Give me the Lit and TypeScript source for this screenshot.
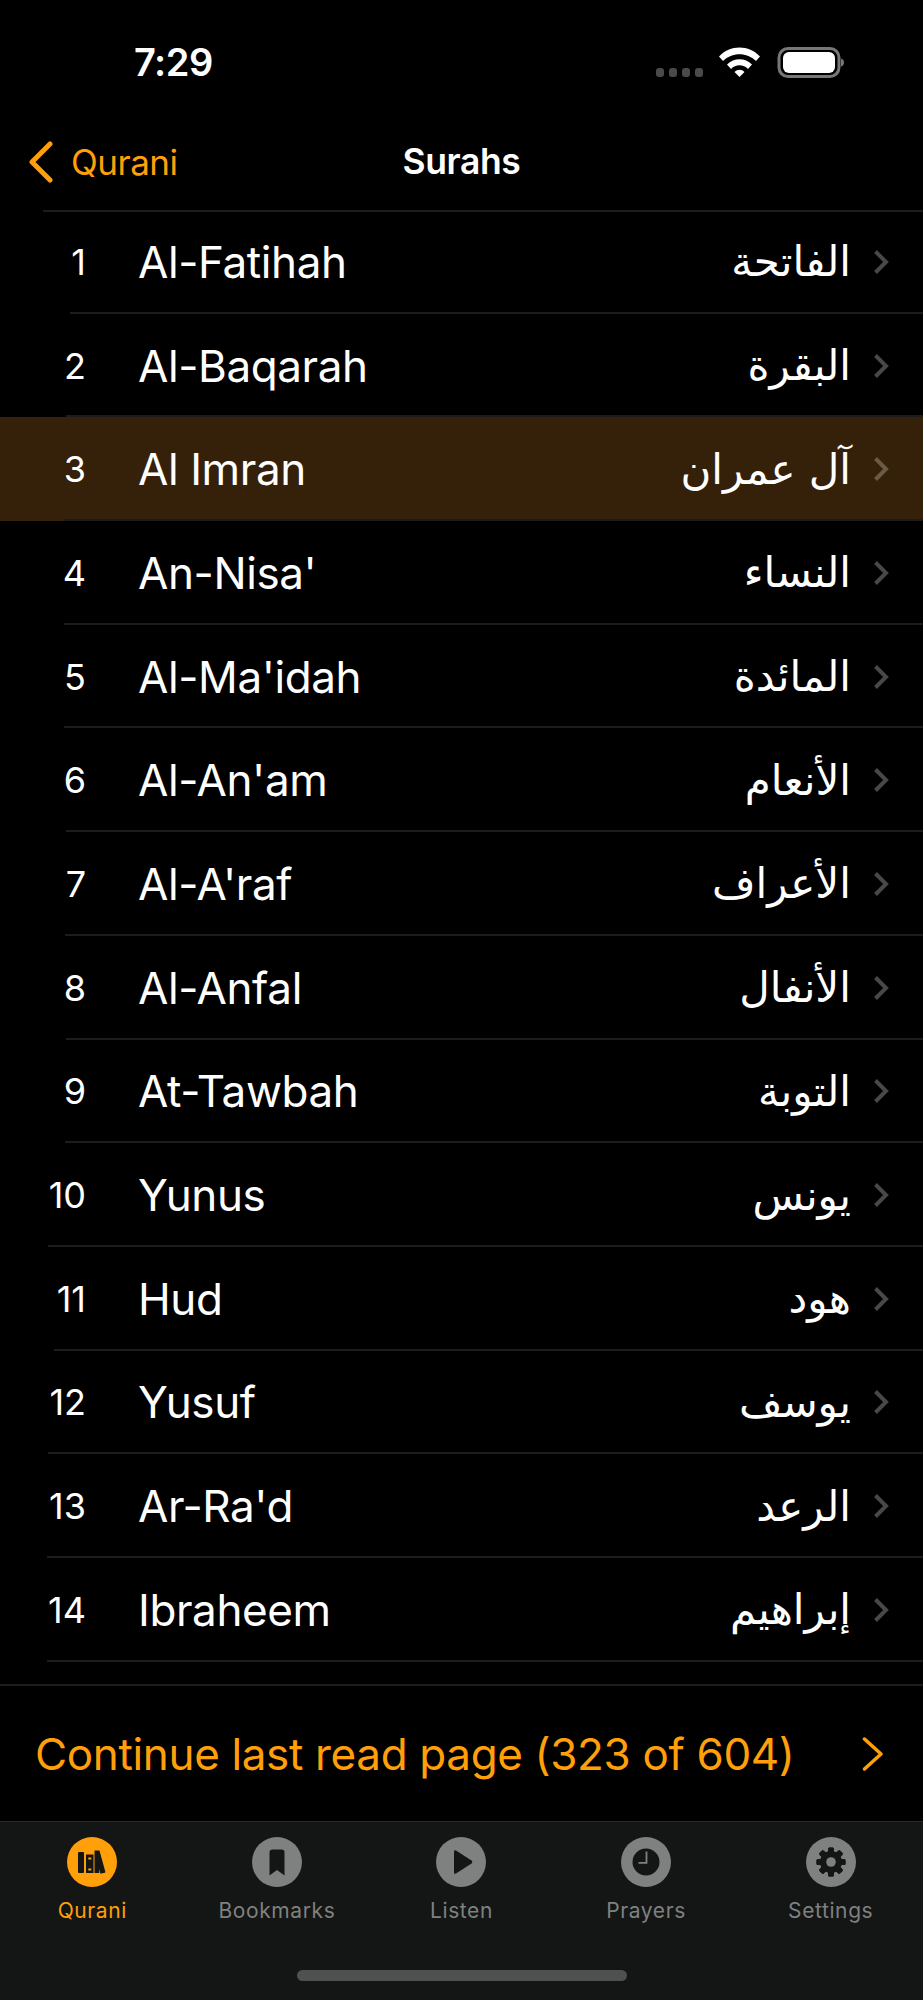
import { LitElement, html, css, svg } from 'lit';
import { customElement } from 'lit/decorators.js';

const surahs = [
  { n: 1, name: 'Al-Fatihah', ar: 'الفاتحة', sep: 70 },
  { n: 2, name: 'Al-Baqarah', ar: 'البقرة', sep: 66 },
  { n: 3, name: 'Al Imran', ar: 'آل عمران', sep: 64, active: true },
  { n: 4, name: "An-Nisa'", ar: 'النساء', sep: 64 },
  { n: 5, name: "Al-Ma'idah", ar: 'المائدة', sep: 64 },
  { n: 6, name: "Al-An'am", ar: 'الأنعام', sep: 66 },
  { n: 7, name: "Al-A'raf", ar: 'الأعراف', sep: 65 },
  { n: 8, name: 'Al-Anfal', ar: 'الأنفال', sep: 66 },
  { n: 9, name: 'At-Tawbah', ar: 'التوبة', sep: 65 },
  { n: 10, name: 'Yunus', ar: 'يونس', sep: 48 },
  { n: 11, name: 'Hud', ar: 'هود', sep: 54 },
  { n: 12, name: 'Yusuf', ar: 'يوسف', sep: 48 },
  { n: 13, name: "Ar-Ra'd", ar: 'الرعد', sep: 47 },
  { n: 14, name: 'Ibraheem', ar: 'إبراهيم', sep: 47 },
];

const gearTeeth = [0, 45, 90, 135, 180, 225, 270, 315];

const tabs = [
  {
    label: 'Qurani',
    active: true,
    icon: svg`
      <rect x="11" y="15" width="6" height="21" rx="1"/>
      <path d="M19 17.5h7.5V36H19z M21.3 20.5v2h3v-2z M21.3 31.5v2h3v-2z" fill-rule="evenodd"/>
      <path d="M27.5 13.5h5l6 22-5 1.3-1.2-4.8v4h-4.800z"/>`,
  },
  {
    label: 'Bookmarks',
    icon: svg`<path d="M17.500 15.500q0-3 3-3h9q3 0 3 3V38.500L25 33l-7.500 5.500z"/>`,
  },
  {
    label: 'Listen',
    icon: svg`<path d="M18 14.500q0-2 2-1l15.500 10q1.800 1.500 0 3L20 36.500q-2 1-2-1z"/>`,
  },
  {
    label: 'Prayers',
    icon: svg`
      <circle cx="25" cy="25" r="13.500"/>
      <path d="M25.500 14.500V25.800H17.500" fill="none" stroke="#7f8180" stroke-width="1.800"/>`,
  },
  {
    label: 'Settings',
    icon: svg`
      ${gearTeeth.map((a) => svg`<rect x="22" y="10.500" width="6" height="29" rx="1.500" transform="rotate(${a} 25 25)"/>`)}
      <circle cx="25" cy="25" r="11"/>
      <circle cx="25" cy="25" r="4.800" fill="#7f8180"/>`,
  },
];

@customElement('app-root')
export class AppRoot extends LitElement {
  static styles = css`
    :host {
      display: block;
      width: 923px;
      height: 2000px;
      background: #000;
      color: #fff;
      font-family: Inter, 'Noto Sans', sans-serif;
      overflow: hidden;
    }
    .status {
      height: 120px;
      box-sizing: border-box;
      padding: 42px 79px 0 134px;
      display: flex;
      justify-content: space-between;
      align-items: flex-start;
    }
    .time {
      font-size: 38px;
      font-weight: 600;
      line-height: 40px;
      letter-spacing: -0.5px;
    }
    .status-icons {
      display: flex;
      align-items: flex-start;
      padding-top: 5px;
    }
    .nav {
      height: 90px;
      display: grid;
      grid-template-columns: 1fr auto 1fr;
      align-items: center;
      padding-bottom: 7px;
      box-sizing: border-box;
    }
    .back {
      display: flex;
      align-items: center;
      gap: 16px;
      padding-left: 27px;
      color: #ff9f0a;
      font-size: 35px;
      letter-spacing: -0.5px;
    }
    .title {
      font-size: 35.500px;
      font-weight: 600;
      letter-spacing: -0.4px;
    }
    .list {
      height: 1452px;
    }
    .top-sep {
      height: 2px;
      background: #1c1c1e;
      margin-left: 43px;
      margin-bottom: -2px;
    }
    .row {
      height: 103.700px;
      box-sizing: border-box;
      display: flex;
      align-items: center;
      position: relative;
    }
    .row.active {
      background: #35210a;
    }
    .num {
      width: 86px;
      text-align: right;
      font-size: 36px;
      flex: none;
    }
    .name {
      margin-left: 52px;
      font-size: 44px;
      letter-spacing: -0.4px;
      flex: 1;
    }
    .ar {
      font-family: 'DejaVu Sans', sans-serif;
      font-size: 42px;
      direction: rtl;
    }
    .chev {
      margin: 0 34px 0 22px;
      flex: none;
      display: block;
    }
    .sep {
      position: absolute;
      right: 0;
      bottom: 0;
      height: 2px;
      background: #1c1c1e;
    }
    .continue {
      margin-top: 22px;
      border-top: 2px solid #1c1c1e;
      height: 137px;
      box-sizing: border-box;
      display: flex;
      align-items: center;
      justify-content: space-between;
      padding: 0 39px 0 35px;
      color: #ff9f0a;
      font-size: 44px;
      letter-spacing: -0.35px;
    }
    .tabbar {
      height: 179px;
      box-sizing: border-box;
      border-top: 1px solid #2a2a2a;
      background: #141515;
      padding-top: 15px;
      position: relative;
    }
    .tabs {
      display: grid;
      grid-template-columns: repeat(5, 1fr);
    }
    .tab {
      display: flex;
      flex-direction: column;
      align-items: center;
      color: #7f8180;
      font-size: 21px;
      letter-spacing: 0.6px;
    }
    .tab.active {
      color: #ff9f0a;
    }
    .tab-icon {
      width: 50px;
      height: 50px;
      border-radius: 50%;
      background: currentColor;
      margin-bottom: 11px;
    }
    .tab-icon svg {
      display: block;
      fill: #141515;
    }
    .home {
      width: 330px;
      height: 11px;
      border-radius: 6px;
      background: #4f5050;
      margin: 47px auto 0;
    }
  `;

  render() {
    return html`
      <div class="status">
        <div class="time">7:29</div>
        <div class="status-icons">
          <svg width="188" height="32" viewBox="0 0 188 32">
            <g fill="#4a4a4a">
              <rect x="0" y="21" width="8" height="9" rx="3"/>
              <rect x="13" y="21" width="8" height="9" rx="3"/>
              <rect x="26" y="21" width="8" height="9" rx="3"/>
              <rect x="39" y="21" width="8" height="9" rx="3"/>
            </g>
            <g fill="#fff">
              <path d="M63 9.500C74 -2.500 93 -2.500 104 9.500L100 14C91 5 76 5 67 14z"/>
              <path d="M71 17.500C78 10.500 89 10.500 96 17.500L92 22C87.500 17 79.500 17 75 22z"/>
              <path d="M78.500 25C81.500 22 85.500 22 88.500 25L83.500 30z"/>
            </g>
            <rect x="123" y="1.500" width="60" height="28" rx="9" fill="none" stroke="#777" stroke-width="3"/>
            <rect x="127" y="5" width="52" height="21" rx="6" fill="#fff"/>
            <path d="M185 11.500q3 1 3 4t-3 4z" fill="#777"/>
          </svg>
        </div>
      </div>
      <div class="nav">
        <div class="back">
          <svg width="28" height="42" viewBox="0 0 28 42">
            <path d="M23 3L5 21L23 39" fill="none" stroke="#ff9f0a" stroke-width="5" stroke-linecap="round" stroke-linejoin="round"/>
          </svg>
          Qurani
        </div>
        <div class="title">Surahs</div>
        <div></div>
      </div>
      <div class="list">
        <div class="top-sep"></div>
        ${surahs.map(
          (s) => html`
            <div class="row ${s.active ? 'active' : ''}">
              <div class="num">${s.n}</div>
              <div class="name">${s.name}</div>
              <div class="ar">${s.ar}</div>
              <svg class="chev" width="16" height="26" viewBox="0 0 16 26">
                <path d="M2.500 2.500L13 13L2.500 23.500" fill="none" stroke="${s.active ? '#6b5a45' : '#48484a'}" stroke-width="4"/>
              </svg>
              <div class="sep" style="left:${s.sep}px"></div>
            </div>
          `,
        )}
      </div>
      <div class="continue">
        <span>Continue last read page (323 of 604)</span>
        <svg width="22" height="34" viewBox="0 0 22 34">
          <path d="M2.500 2L19 17L2.500 32" fill="none" stroke="#ff9f0a" stroke-width="3.500" stroke-linecap="round" stroke-linejoin="round"/>
        </svg>
      </div>
      <div class="tabbar">
        <div class="tabs">
          ${tabs.map(
            (t) => html`
              <div class="tab ${t.active ? 'active' : ''}">
                <div class="tab-icon">
                  <svg width="50" height="50" viewBox="0 0 50 50">${t.icon}</svg>
                </div>
                ${t.label}
              </div>
            `,
          )}
        </div>
        <div class="home"></div>
      </div>
    `;
  }
}
